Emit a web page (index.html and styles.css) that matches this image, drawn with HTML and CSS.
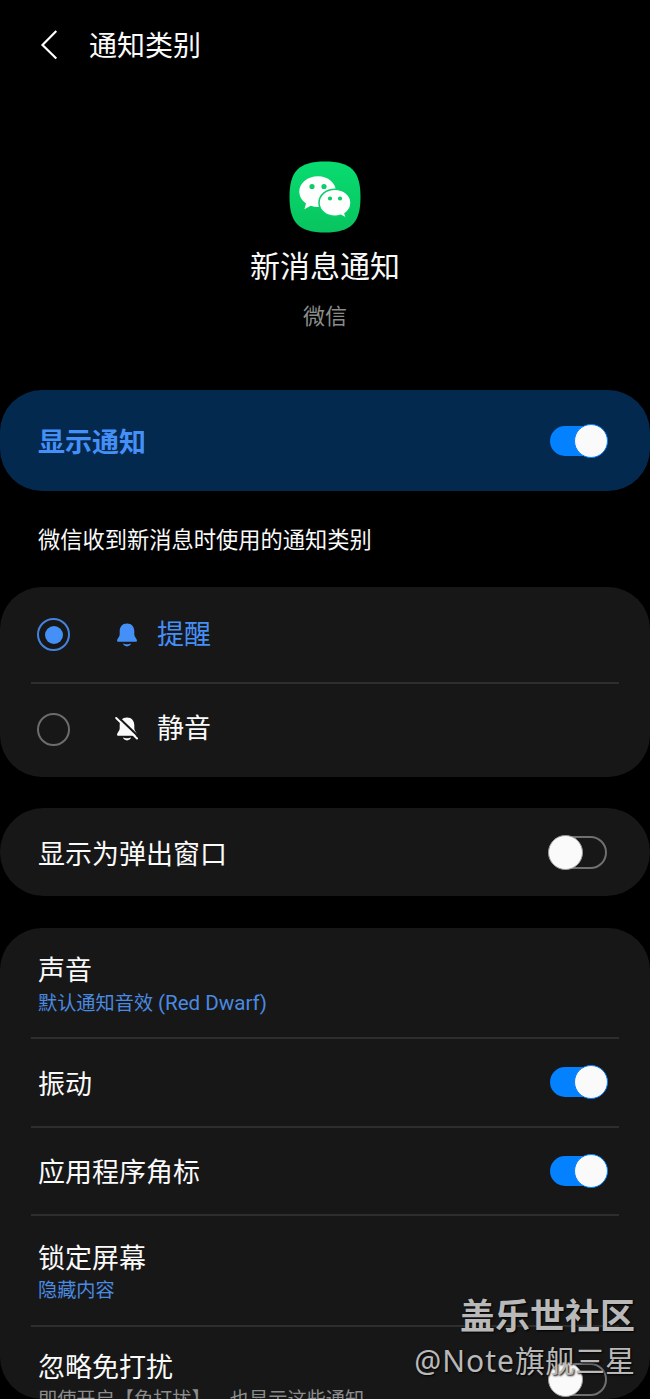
FILE: index.html
```html
<!DOCTYPE html>
<html lang="zh-CN">
<head>
    <meta charset="UTF-8">
    <meta name="viewport" content="width=device-width, initial-scale=1.0">
    <title>通知类别</title>
    <link rel="stylesheet" href="styles.css">
</head>
<body>

<div class="screen">
    <header class="header">
        <svg class="back" width="20" height="32" viewBox="0 0 20 32">
            <path d="M17.3 2 L3.5 16 L17.3 29.5" fill="none" stroke="#fff" stroke-width="2.2"/>
        </svg>
        <h1>通知类别</h1>
    </header>

    <section class="app">
        <svg class="app-icon" width="72" height="72" viewBox="0 0 72 72">
            <defs>
                <linearGradient id="green" x1="0" y1="0" x2="0" y2="1">
                    <stop offset="0" stop-color="#08dc70"/>
                    <stop offset="1" stop-color="#08c45f"/>
                </linearGradient>
            </defs>
            <path d="M36 .5 C62 .5 71.5 10 71.5 36 C71.5 62 62 71.5 36 71.5 C10 71.5 .5 62 .5 36 C.5 10 10 .5 36 .5Z" fill="url(#green)"/>
            <path d="M29 15.2c-10.400 0-18.700 6.800-18.700 15.400 0 4.900 2.600 9.100 6.700 11.900l-1.600 5.700 6.300-3.400c2.300.8 4.700 1.200 7.300 1.200 10 0 18-6.700 18-15.400s-8-15.400-18-15.400z" fill="#fff"/>
            <circle cx="23" cy="25.500" r="2.600" fill="#08cf67"/>
            <circle cx="35" cy="25.500" r="2.600" fill="#08cf67"/>
            <path d="M46 28.200c-8.900 0-16 6-16 13.500s7.100 13.500 16 13.500c2 0 4-.3 5.800-.9l5.800 3.200-1.600-5c3.700-2.500 6-6.400 6-10.800 0-7.500-7.100-13.500-16-13.500z" fill="#fff" stroke="#08cf67" stroke-width="1.500"/>
            <circle cx="41" cy="37.500" r="2.100" fill="#08cf67"/>
            <circle cx="51" cy="37.500" r="2.100" fill="#08cf67"/>
        </svg>
        <h2>新消息通知</h2>
        <p>微信</p>
    </section>

    <div class="card main-switch">
        <span class="label">显示通知</span>
        <span class="switch on"></span>
    </div>

    <p class="description">微信收到新消息时使用的通知类别</p>

    <div class="card options">
        <div class="option selected">
            <span class="radio"></span>
            <svg class="bell" width="24" height="26" viewBox="0 0 24 26">
                <path d="M12 1.500C7.200 1.500 4.700 5 4.700 9.200v3.300c0 2.700-2.700 4.200-2.700 6.300 0 .6.400.9 1 .9h18c.6 0 1-.3 1-.9 0-2.100-2.700-3.600-2.700-6.300V9.200C19.300 5 16.800 1.500 12 1.500z" fill="currentColor"/>
                <path d="M8 21.600c.5 1.700 2 2.800 4 2.800s3.500-1.100 4-2.800c-2 .9-6 .9-8 0z" fill="currentColor"/>
            </svg>
            <span>提醒</span>
        </div>
        <div class="option">
            <span class="radio"></span>
            <svg class="bell" width="24" height="26" viewBox="0 0 24 26">
                <path d="M12 1.500C7.200 1.500 4.700 5 4.700 9.200v3.300c0 2.700-2.700 4.200-2.700 6.300 0 .6.400.9 1 .9h18c.6 0 1-.3 1-.9 0-2.100-2.700-3.600-2.700-6.300V9.200C19.300 5 16.800 1.500 12 1.500z" fill="currentColor"/>
                <path d="M8 21.600c.5 1.700 2 2.800 4 2.800s3.500-1.100 4-2.800c-2 .9-6 .9-8 0z" fill="currentColor"/>
                <path d="M2.500 .5L24 21" stroke="#171717" stroke-width="2.200"/>
                <path d="M1.200 2L22 22.500" stroke="currentColor" stroke-width="2" stroke-linecap="round"/>
            </svg>
            <span>静音</span>
        </div>
    </div>

    <div class="card popup">
        <span class="label">显示为弹出窗口</span>
        <span class="switch"></span>
    </div>

    <div class="card settings">
        <div class="row tall">
            <div>
                <div class="label">声音</div>
                <div class="value">默认通知音效 <span class="latin">(Red Dwarf)</span></div>
            </div>
        </div>
        <div class="row">
            <div class="label">振动</div>
            <span class="switch on"></span>
        </div>
        <div class="row">
            <div class="label">应用程序角标</div>
            <span class="switch on"></span>
        </div>
        <div class="row tall">
            <div>
                <div class="label">锁定屏幕</div>
                <div class="value">隐藏内容</div>
            </div>
        </div>
        <div class="row tall last">
            <div>
                <div class="label">忽略免打扰</div>
                <div class="value muted">即使开启【免打扰】，也显示这些通知</div>
            </div>
            <span class="switch"></span>
        </div>
    </div>

    <div class="watermark">
        <strong>盖乐世社区</strong>
        <span><span class="handle">@Note</span>旗舰三星</span>
    </div>
</div>

</body>
</html>
```

FILE: styles.css
```css
*, *::after {
    box-sizing: border-box;
}

body {
    margin: 0;
    background-color: #000;
    color: #fafafa;
    font-family: Roboto, "Noto Sans CJK SC", sans-serif;
    font-size: 27px;
    line-height: 36px;
}

h1, h2, p {
    margin: 0;
    font-weight: normal;
}

.screen {
    position: relative;
    height: 1399px;
    overflow: hidden;
}

.header {
    display: flex;
    align-items: center;
    height: 90px;
    padding-left: 39px;
}

.header h1 {
    margin-left: 30px;
    padding-top: 4px;
    font-size: 28px;
}

.app {
    display: flex;
    flex-direction: column;
    align-items: center;
    height: 300px;
    padding-top: 71px;
}

.app h2 {
    margin-top: 14px;
    font-size: 30px;
    line-height: 40px;
}

.app p {
    margin-top: 15px;
    font-size: 22px;
    line-height: 30px;
    color: #8c8c8c;
}

.card {
    background-color: #171717;
    border-radius: 44px;
}

.main-switch {
    display: flex;
    align-items: center;
    justify-content: space-between;
    height: 101px;
    padding: 0 43px 0 38px;
    border-radius: 42px;
    background-color: #03294f;
    color: #4590f7;
    font-weight: bold;
}

.description {
    padding: 34px 38px 0;
    height: 96px;
    font-size: 22.25px;
    line-height: 30px;
}

.options {
    height: 190px;
    border-radius: 42px;
}

.option {
    display: flex;
    align-items: center;
    height: 95px;
    margin: 0 31px;
    padding-left: 6px;
}

.option + .option {
    padding-bottom: 3px;
    border-top: 2px solid #2e2e2e;
}

.selected {
    color: #4590f7;
}

.radio {
    display: flex;
    align-items: center;
    justify-content: center;
    width: 33px;
    height: 33px;
    border: 2px solid #6c6c6c;
    border-radius: 50%;
}

.selected .radio {
    border-color: #4383de;
}

.selected .radio::after {
    content: "";
    width: 18px;
    height: 18px;
    border-radius: 50%;
    background-color: #4590f7;
}

.bell {
    margin: 0 18.5px 0 44.5px;
}

.popup {
    display: flex;
    align-items: center;
    justify-content: space-between;
    height: 88px;
    margin: 31px 0 32px;
    padding: 0 43px 0 38px;
}

.settings {
    height: 471px;
    padding: 0 31px;
    overflow: hidden;
    border-radius: 42px;
}

.row {
    display: flex;
    align-items: center;
    justify-content: space-between;
    height: 88.5px;
    padding: 0 12px 0 7px;
    border-bottom: 2px solid #2e2e2e;
}

.tall {
    height: 111px;
}

.last {
    padding-bottom: 6px;
    border-bottom: none;
}

.label {
    padding-top: 5px;
}

.value {
    font-size: 19.2px;
    line-height: 28px;
    color: #4a8ae0;
    text-spacing-trim: space-all;
}

.latin {
    font-size: 20.6px;
}

.muted {
    color: #8c8c8c;
}

/* Interruptor */
.switch {
    position: relative;
    width: 57px;
    height: 33px;
    border: 2px solid #707070;
    border-radius: 17px;
}

.switch::after {
    content: "";
    position: absolute;
    top: -3px;
    left: -4px;
    width: 35px;
    height: 35px;
    border: 1px solid #999;
    border-radius: 50%;
    background-color: #fafafa;
}

.switch.on {
    height: 30px;
    border: none;
    background-color: #0381fe;
}

.switch.on::after {
    top: -2px;
    left: 24px;
    width: 34px;
    height: 34px;
    border-color: #0381fe;
}

.watermark {
    position: absolute;
    right: 15px;
    bottom: 18px;
    display: flex;
    flex-direction: column;
    align-items: flex-end;
    color: #b9b9b9;
    text-shadow: 1px 1px 2px #000;
}

.watermark strong {
    font-size: 35px;
    line-height: 46px;
}

.watermark span {
    font-family: "Noto Sans", "Noto Sans CJK SC", sans-serif;
    font-size: 30px;
    line-height: 40px;
}

.watermark .handle {
    letter-spacing: 1px;
}
```
